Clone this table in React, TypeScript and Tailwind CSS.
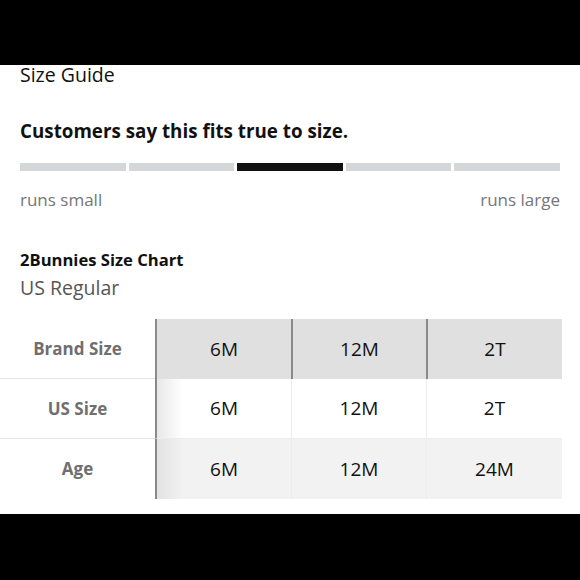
import React from 'react';

const rows = [
  { label: 'Brand Size', values: ['6M', '12M', '2T'], head: true },
  { label: 'US Size', values: ['6M', '12M', '2T'] },
  { label: 'Age', values: ['6M', '12M', '24M'], shade: true },
];

const fit = [false, false, true, false, false];

export default function App() {
  return (
    <div className="w-[580px] h-[580px] bg-black flex flex-col font-['Open_Sans','Noto_Sans',sans-serif]">
      <div className="h-[65px] shrink-0" />
      <div className="h-[449px] bg-white overflow-hidden flex flex-col">
        <div className="pl-[20px] text-[19.5px] leading-[20px] text-[#111]">Size Guide</div>

        <div className="mt-[37px] pl-[20px] text-[18.8px] leading-[19px] font-bold text-[#111]">
          Customers say this fits true to size.
        </div>

        <div className="mt-[22px] mx-[20px] flex gap-[3px]">
          {fit.map((on, i) => (
            <div key={i} className={`h-[8px] flex-1 ${on ? 'bg-[#111]' : 'bg-[#d5d6d8]'}`} />
          ))}
        </div>

        <div className="mt-[20px] px-[20px] flex justify-between text-[17px] leading-[18px] text-[#767676]">
          <span>runs small</span>
          <span>runs large</span>
        </div>

        <div className="mt-[42px] pl-[20px] text-[16.6px] leading-[17px] font-bold text-[#111]">2Bunnies Size Chart</div>
        <div className="mt-[10px] pl-[20px] text-[19.5px] leading-[20px] text-[#565656]">US Regular</div>

        <div className="mt-[21px] w-[562px] grid grid-cols-[155px_136px_135px_136px]">
          {rows.map((r, ri) => (
            <React.Fragment key={r.label}>
              <div
                className={`h-[60px] flex items-center justify-center text-[17px] font-bold text-[#6f6f6f] ${
                  ri < rows.length - 1 ? 'border-b border-[#e6e6e6]' : ''
                }`}
              >
                {r.label}
              </div>
              {r.values.map((v, ci) => {
                let cls = 'h-[60px] flex items-center justify-center text-[19px] text-[#111] ';
                if (r.head) {
                  cls += 'bg-[#e0e0e0] border-l-2 border-[#8a8a8a]';
                } else {
                  cls += ci === 0 ? 'border-l-2 border-[#8a8a8a] ' : 'border-l border-[#ececec] ';
                  if (r.shade) {
                    cls += ci === 0 ? 'bg-[linear-gradient(to_right,#e2e2e2,#f2f2f2_26px)] ' : 'bg-[#f2f2f2] ';
                  } else {
                    cls += ci === 0 ? 'bg-[linear-gradient(to_right,#e8e8e8,#ffffff_26px)] ' : 'bg-white ';
                  }
                  if (ri === 1) cls += 'border-b border-b-[#ececec]';
                }
                return (
                  <div key={ci} className={cls}>
                    {v}
                  </div>
                );
              })}
            </React.Fragment>
          ))}
        </div>
      </div>
    </div>
  );
}
